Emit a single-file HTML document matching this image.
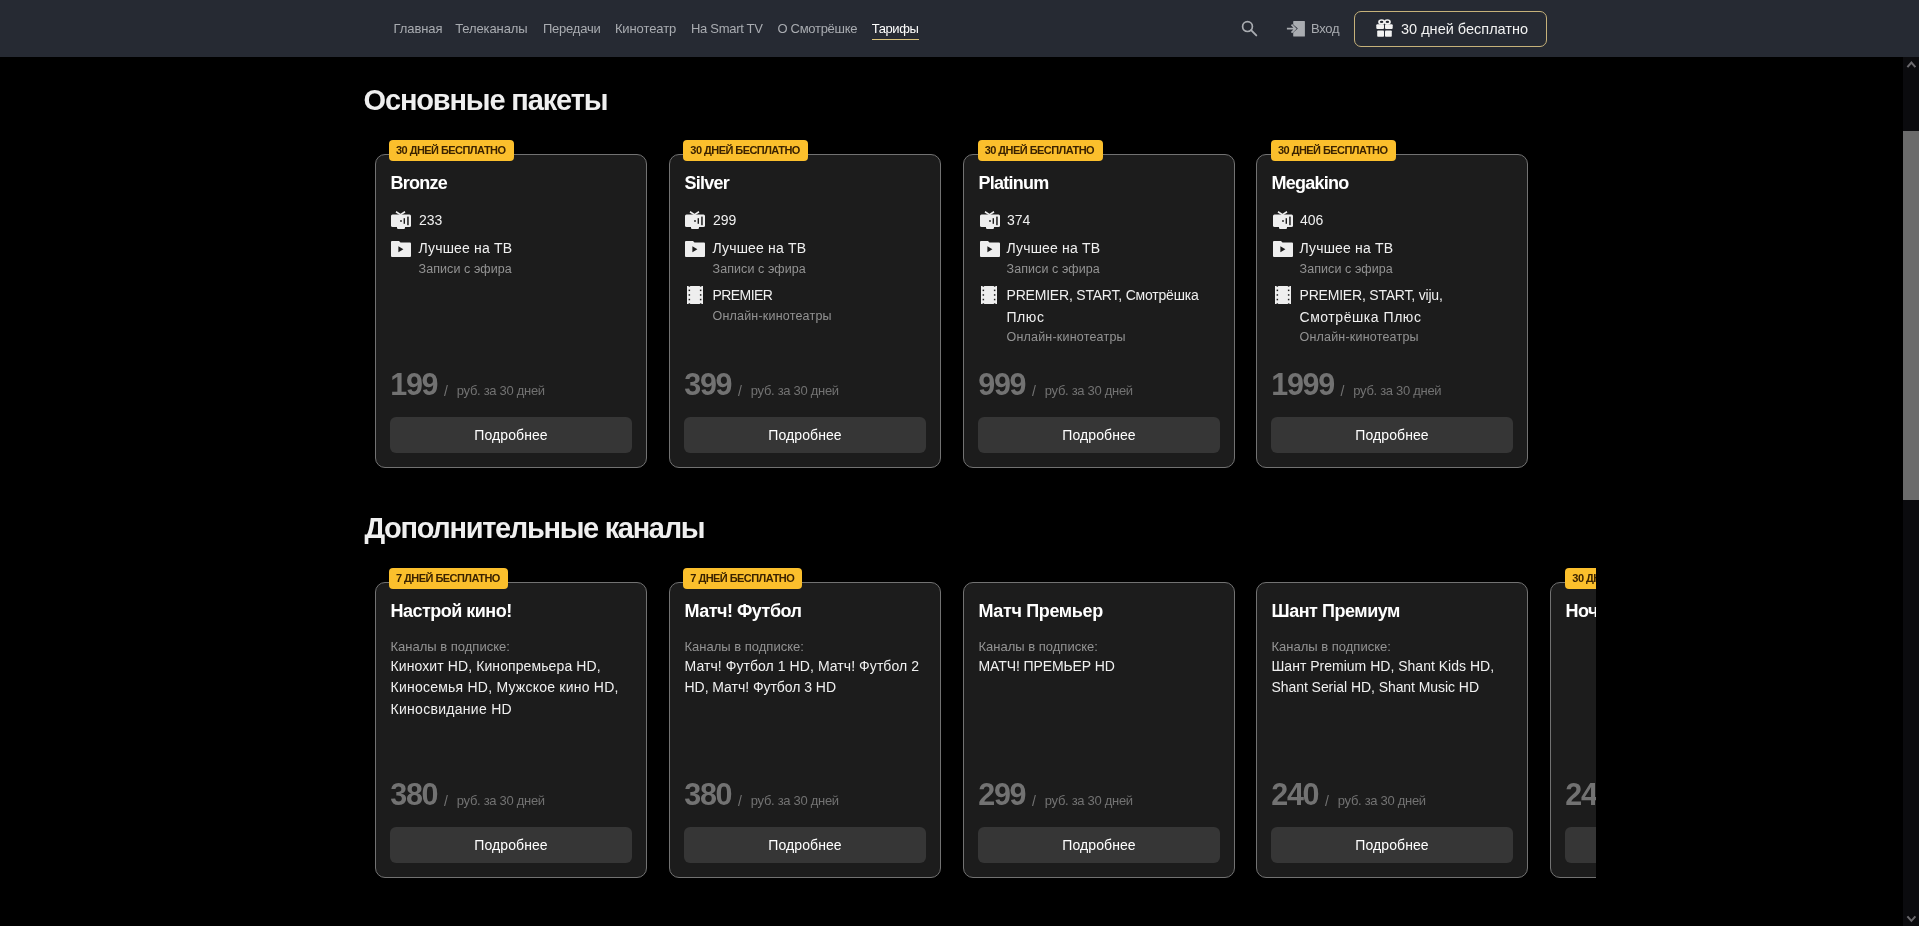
<!DOCTYPE html>
<html><head><meta charset="utf-8"><style>
html,body{margin:0;padding:0;background:#000;width:1920px;height:926px;overflow:hidden;position:relative;font-family:"Liberation Sans",sans-serif}
.t{position:absolute;white-space:nowrap;font-family:"Liberation Sans",sans-serif}
</style></head><body><div id="root" style="position:absolute;left:0;top:0;width:1920px;height:926px;will-change:transform">
<div style="position:absolute;left:0px;top:0px;width:1919px;height:57px;background:#262a33"></div>
<div class="t" style="left:393.59999999999997px;top:22.00px;font-size:13px;line-height:13px;font-weight:400;color:#a9acb1;letter-spacing:-0.1px;">Главная</div>
<div class="t" style="left:455.2px;top:22.00px;font-size:13px;line-height:13px;font-weight:400;color:#a9acb1;letter-spacing:-0.1px;">Телеканалы</div>
<div class="t" style="left:542.9000000000001px;top:22.00px;font-size:13px;line-height:13px;font-weight:400;color:#a9acb1;letter-spacing:-0.2px;">Передачи</div>
<div class="t" style="left:614.9000000000001px;top:22.00px;font-size:13px;line-height:13px;font-weight:400;color:#a9acb1;letter-spacing:-0.1px;">Кинотеатр</div>
<div class="t" style="left:691.0px;top:22.00px;font-size:13px;line-height:13px;font-weight:400;color:#a9acb1;letter-spacing:-0.3px;">На Smart TV</div>
<div class="t" style="left:777.5px;top:22.00px;font-size:13px;line-height:13px;font-weight:400;color:#a9acb1;letter-spacing:-0.3px;">О Смотрёшке</div>
<div class="t" style="left:871.7px;top:22.00px;font-size:13px;line-height:13px;font-weight:400;color:#fff;letter-spacing:-0.4px;">Тарифы</div>
<div style="position:absolute;left:872px;top:38.5px;width:47px;height:1.5px;background:#dcc47c"></div>
<svg style="position:absolute;left:1240px;top:20px" width="18" height="18" viewBox="0 0 18 18"><circle cx="7.5" cy="6.6" r="4.9" fill="none" stroke="#a9acb1" stroke-width="1.7"/><line x1="11.1" y1="10.2" x2="16.3" y2="15.4" stroke="#a9acb1" stroke-width="1.9" stroke-linecap="round"/></svg>
<svg style="position:absolute;left:1286px;top:20px" width="20" height="18" viewBox="0 0 20 18"><path d="M7.2 1.5 a0.6 0.6 0 0 1 0.6 -0.6 h10.5 a0.6 0.6 0 0 1 0.6 0.6 v14.5 a0.6 0.6 0 0 1 -0.6 0.6 h-10.5 a0.6 0.6 0 0 1 -0.6 -0.6 v-3.4 l4.6 -4 l-4.6 -4z" fill="#a9acb1"/><path d="M0.9 8.7 h8.8 M5.5 4.7 l4 4 l-4 4" fill="none" stroke="#a9acb1" stroke-width="1.8"/></svg>
<div class="t" style="left:1311px;top:22.00px;font-size:13px;line-height:13px;font-weight:400;color:#a9acb1;letter-spacing:-0.3px;">Вход</div>
<div style="position:absolute;left:1354px;top:11px;width:193px;height:36px;box-sizing:border-box;border:1.6px solid #c6b27a;border-radius:7px"></div>
<svg style="position:absolute;left:1375.5px;top:19px" width="17" height="18" viewBox="0 0 17 18"><ellipse cx="5.6" cy="2.9" rx="2.6" ry="1.9" fill="none" stroke="#f2f2f2" stroke-width="1.7"/><ellipse cx="11.4" cy="2.9" rx="2.6" ry="1.9" fill="none" stroke="#f2f2f2" stroke-width="1.7"/><rect x="0.3" y="5.3" width="7.7" height="4.6" rx="1" fill="#f2f2f2"/><rect x="9" y="5.3" width="7.7" height="4.6" rx="1" fill="#f2f2f2"/><rect x="1.2" y="11.5" width="6.8" height="6.3" rx="0.8" fill="#f2f2f2"/><rect x="9" y="11.5" width="6.8" height="6.3" rx="0.8" fill="#f2f2f2"/></svg>
<div class="t" style="left:1401px;top:21.93px;font-size:14.5px;line-height:14.5px;font-weight:400;color:#f2f2f2;letter-spacing:0px;">30 дней бесплатно</div>
<div style="position:absolute;left:1903px;top:57px;width:16px;height:869px;background:#0b0b0e"></div>
<div style="position:absolute;left:1903px;top:131px;width:16px;height:369px;background:#6b6b6b"></div>
<div style="position:absolute;left:1919px;top:0px;width:1px;height:926px;background:#fff"></div>
<svg style="position:absolute;left:1903px;top:57px" width="16" height="16" viewBox="0 0 16 16"><path d="M4.4 10.2 L8.4 5.6 L12.4 10.2" fill="none" stroke="#6b696d" stroke-width="2"/></svg>
<svg style="position:absolute;left:1903px;top:908px" width="16" height="16" viewBox="0 0 16 16"><path d="M4.4 8.4 L8.4 12.8 L12.4 8.4" fill="none" stroke="#6b696d" stroke-width="2"/></svg>
<div class="t" style="left:363.5px;top:86.35px;font-size:29px;line-height:29px;font-weight:700;color:#efefef;letter-spacing:-1.15px;">Основные пакеты</div>
<div class="t" style="left:364.4px;top:514.35px;font-size:29px;line-height:29px;font-weight:700;color:#efefef;letter-spacing:-1.32px;">Дополнительные каналы</div>
<div style="position:absolute;left:375px;top:154.2px;width:272px;height:313.7px;box-sizing:border-box;background:#1c1c1c;border:1px solid #727272;border-radius:10px"></div>
<div style="position:absolute;left:389.0px;top:139.89999999999998px;width:125px;height:21.2px;background:#fbbf2c;border-radius:4px"></div>
<div class="t" style="left:396.0px;top:144.79px;font-size:11px;line-height:11px;font-weight:700;color:#3a2200;letter-spacing:-0.55px;">30 ДНЕЙ БЕСПЛАТНО</div>
<div class="t" style="left:390.5px;top:173.76px;font-size:18px;line-height:18px;font-weight:700;color:#fff;letter-spacing:-0.75px;">Bronze</div>
<svg style="position:absolute;left:391.0px;top:210.5px" width="20" height="19" viewBox="0 0 20 19"><path d="M5 0.8 L9.5 3.6 L14 0.8" fill="none" stroke="#eee" stroke-width="1.6"/><rect x="0" y="3.5" width="20" height="12.5" rx="1.5" fill="#eee"/><rect x="6" y="15.3" width="8" height="2.6" rx="0.8" fill="#eee"/><circle cx="10" cy="10" r="0.9" fill="#1c1c1c"/><rect x="12.6" y="7.2" width="1.4" height="5.6" fill="#1c1c1c"/><rect x="16.2" y="5.6" width="1.5" height="8.6" fill="#1c1c1c"/></svg>
<div class="t" style="left:419px;top:212.95px;font-size:14px;line-height:14px;font-weight:400;color:#f0f0f0;letter-spacing:0px;">233</div>
<svg style="position:absolute;left:391.0px;top:240.5px" width="20" height="16" viewBox="0 0 20 16"><path d="M0 1 a1 1 0 0 1 1 -1 h7 l1.5 1.6 h9.5 a1 1 0 0 1 1 1 v12.4 a1 1 0 0 1 -1 1 h-18 a1 1 0 0 1 -1 -1z" fill="#eee"/><path d="M7.4 5.2 L12.4 8.2 L7.4 11.2z" fill="#1c1c1c"/></svg>
<div class="t" style="left:418.5px;top:240.85px;font-size:14px;line-height:14px;font-weight:400;color:#f0f0f0;letter-spacing:0.17px;">Лучшее на ТВ</div>
<div class="t" style="left:418.5px;top:263.22px;font-size:12.5px;line-height:12.5px;font-weight:400;color:#939393;letter-spacing:0.08px;">Записи с эфира</div>
<div class="t" style="left:390.3px;top:369.18px;font-size:30.5px;line-height:30.5px;font-weight:700;color:#727272;letter-spacing:-1.3px;">199</div>
<div class="t" style="left:444.0px;top:383.85px;font-size:14px;line-height:14px;font-weight:400;color:#727272;letter-spacing:0px;">/</div>
<div class="t" style="left:456.8px;top:384.00px;font-size:13px;line-height:13px;font-weight:400;color:#727272;letter-spacing:-0.3px;">руб. за 30 дней</div>
<div style="position:absolute;left:390px;top:417px;width:242px;height:35.5px;background:#363636;border-radius:6px"></div>
<div class="t" style="left:511px;top:428.15px;font-size:14px;line-height:14px;font-weight:400;color:#fff;letter-spacing:0.1px;transform:translateX(-50%)">Подробнее</div>
<div style="position:absolute;left:669px;top:154.2px;width:272px;height:313.7px;box-sizing:border-box;background:#1c1c1c;border:1px solid #727272;border-radius:10px"></div>
<div style="position:absolute;left:683.33px;top:139.89999999999998px;width:125px;height:21.2px;background:#fbbf2c;border-radius:4px"></div>
<div class="t" style="left:690.33px;top:144.79px;font-size:11px;line-height:11px;font-weight:700;color:#3a2200;letter-spacing:-0.55px;">30 ДНЕЙ БЕСПЛАТНО</div>
<div class="t" style="left:684.5px;top:173.76px;font-size:18px;line-height:18px;font-weight:700;color:#fff;letter-spacing:-0.75px;">Silver</div>
<svg style="position:absolute;left:685.33px;top:210.5px" width="20" height="19" viewBox="0 0 20 19"><path d="M5 0.8 L9.5 3.6 L14 0.8" fill="none" stroke="#eee" stroke-width="1.6"/><rect x="0" y="3.5" width="20" height="12.5" rx="1.5" fill="#eee"/><rect x="6" y="15.3" width="8" height="2.6" rx="0.8" fill="#eee"/><circle cx="10" cy="10" r="0.9" fill="#1c1c1c"/><rect x="12.6" y="7.2" width="1.4" height="5.6" fill="#1c1c1c"/><rect x="16.2" y="5.6" width="1.5" height="8.6" fill="#1c1c1c"/></svg>
<div class="t" style="left:713px;top:212.95px;font-size:14px;line-height:14px;font-weight:400;color:#f0f0f0;letter-spacing:0px;">299</div>
<svg style="position:absolute;left:685.33px;top:240.5px" width="20" height="16" viewBox="0 0 20 16"><path d="M0 1 a1 1 0 0 1 1 -1 h7 l1.5 1.6 h9.5 a1 1 0 0 1 1 1 v12.4 a1 1 0 0 1 -1 1 h-18 a1 1 0 0 1 -1 -1z" fill="#eee"/><path d="M7.4 5.2 L12.4 8.2 L7.4 11.2z" fill="#1c1c1c"/></svg>
<div class="t" style="left:712.5px;top:240.85px;font-size:14px;line-height:14px;font-weight:400;color:#f0f0f0;letter-spacing:0.17px;">Лучшее на ТВ</div>
<div class="t" style="left:712.5px;top:263.22px;font-size:12.5px;line-height:12.5px;font-weight:400;color:#939393;letter-spacing:0.08px;">Записи с эфира</div>
<svg style="position:absolute;left:686.83px;top:286px" width="16" height="18" viewBox="0 0 16 18"><rect width="16" height="18" fill="#eee"/><rect x="1.6" y="-0.8" width="1.5" height="1.5" fill="#1c1c1c"/><rect x="12.9" y="-0.8" width="1.5" height="1.5" fill="#1c1c1c"/><rect x="1.6" y="3.6" width="1.5" height="1.5" fill="#1c1c1c"/><rect x="12.9" y="3.6" width="1.5" height="1.5" fill="#1c1c1c"/><rect x="1.6" y="8.2" width="1.5" height="1.5" fill="#1c1c1c"/><rect x="12.9" y="8.2" width="1.5" height="1.5" fill="#1c1c1c"/><rect x="1.6" y="12.8" width="1.5" height="1.5" fill="#1c1c1c"/><rect x="12.9" y="12.8" width="1.5" height="1.5" fill="#1c1c1c"/><rect x="1.6" y="17.3" width="1.5" height="1.5" fill="#1c1c1c"/><rect x="12.9" y="17.3" width="1.5" height="1.5" fill="#1c1c1c"/></svg>
<div class="t" style="left:712.5px;top:288.15px;font-size:14px;line-height:14px;font-weight:400;color:#f0f0f0;letter-spacing:-0.57px;">PREMIER</div>
<div class="t" style="left:712.5px;top:309.62px;font-size:12.5px;line-height:12.5px;font-weight:400;color:#939393;letter-spacing:0.2px;">Онлайн-кинотеатры</div>
<div class="t" style="left:684.3px;top:369.18px;font-size:30.5px;line-height:30.5px;font-weight:700;color:#727272;letter-spacing:-1.3px;">399</div>
<div class="t" style="left:738.0px;top:383.85px;font-size:14px;line-height:14px;font-weight:400;color:#727272;letter-spacing:0px;">/</div>
<div class="t" style="left:750.8px;top:384.00px;font-size:13px;line-height:13px;font-weight:400;color:#727272;letter-spacing:-0.3px;">руб. за 30 дней</div>
<div style="position:absolute;left:684px;top:417px;width:242px;height:35.5px;background:#363636;border-radius:6px"></div>
<div class="t" style="left:805px;top:428.15px;font-size:14px;line-height:14px;font-weight:400;color:#fff;letter-spacing:0.1px;transform:translateX(-50%)">Подробнее</div>
<div style="position:absolute;left:963px;top:154.2px;width:272px;height:313.7px;box-sizing:border-box;background:#1c1c1c;border:1px solid #727272;border-radius:10px"></div>
<div style="position:absolute;left:977.67px;top:139.89999999999998px;width:125px;height:21.2px;background:#fbbf2c;border-radius:4px"></div>
<div class="t" style="left:984.67px;top:144.79px;font-size:11px;line-height:11px;font-weight:700;color:#3a2200;letter-spacing:-0.55px;">30 ДНЕЙ БЕСПЛАТНО</div>
<div class="t" style="left:978.5px;top:173.76px;font-size:18px;line-height:18px;font-weight:700;color:#fff;letter-spacing:-0.75px;">Platinum</div>
<svg style="position:absolute;left:979.67px;top:210.5px" width="20" height="19" viewBox="0 0 20 19"><path d="M5 0.8 L9.5 3.6 L14 0.8" fill="none" stroke="#eee" stroke-width="1.6"/><rect x="0" y="3.5" width="20" height="12.5" rx="1.5" fill="#eee"/><rect x="6" y="15.3" width="8" height="2.6" rx="0.8" fill="#eee"/><circle cx="10" cy="10" r="0.9" fill="#1c1c1c"/><rect x="12.6" y="7.2" width="1.4" height="5.6" fill="#1c1c1c"/><rect x="16.2" y="5.6" width="1.5" height="8.6" fill="#1c1c1c"/></svg>
<div class="t" style="left:1007px;top:212.95px;font-size:14px;line-height:14px;font-weight:400;color:#f0f0f0;letter-spacing:0px;">374</div>
<svg style="position:absolute;left:979.67px;top:240.5px" width="20" height="16" viewBox="0 0 20 16"><path d="M0 1 a1 1 0 0 1 1 -1 h7 l1.5 1.6 h9.5 a1 1 0 0 1 1 1 v12.4 a1 1 0 0 1 -1 1 h-18 a1 1 0 0 1 -1 -1z" fill="#eee"/><path d="M7.4 5.2 L12.4 8.2 L7.4 11.2z" fill="#1c1c1c"/></svg>
<div class="t" style="left:1006.5px;top:240.85px;font-size:14px;line-height:14px;font-weight:400;color:#f0f0f0;letter-spacing:0.17px;">Лучшее на ТВ</div>
<div class="t" style="left:1006.5px;top:263.22px;font-size:12.5px;line-height:12.5px;font-weight:400;color:#939393;letter-spacing:0.08px;">Записи с эфира</div>
<svg style="position:absolute;left:981.17px;top:286px" width="16" height="18" viewBox="0 0 16 18"><rect width="16" height="18" fill="#eee"/><rect x="1.6" y="-0.8" width="1.5" height="1.5" fill="#1c1c1c"/><rect x="12.9" y="-0.8" width="1.5" height="1.5" fill="#1c1c1c"/><rect x="1.6" y="3.6" width="1.5" height="1.5" fill="#1c1c1c"/><rect x="12.9" y="3.6" width="1.5" height="1.5" fill="#1c1c1c"/><rect x="1.6" y="8.2" width="1.5" height="1.5" fill="#1c1c1c"/><rect x="12.9" y="8.2" width="1.5" height="1.5" fill="#1c1c1c"/><rect x="1.6" y="12.8" width="1.5" height="1.5" fill="#1c1c1c"/><rect x="12.9" y="12.8" width="1.5" height="1.5" fill="#1c1c1c"/><rect x="1.6" y="17.3" width="1.5" height="1.5" fill="#1c1c1c"/><rect x="12.9" y="17.3" width="1.5" height="1.5" fill="#1c1c1c"/></svg>
<div class="t" style="left:1006.5px;top:288.15px;font-size:14px;line-height:14px;font-weight:400;color:#f0f0f0;letter-spacing:-0.2px;">PREMIER, START, Смотрёшка</div>
<div class="t" style="left:1006.5px;top:309.65px;font-size:14px;line-height:14px;font-weight:400;color:#f0f0f0;letter-spacing:0.55px;">Плюс</div>
<div class="t" style="left:1006.5px;top:331.12px;font-size:12.5px;line-height:12.5px;font-weight:400;color:#939393;letter-spacing:0.2px;">Онлайн-кинотеатры</div>
<div class="t" style="left:978.3px;top:369.18px;font-size:30.5px;line-height:30.5px;font-weight:700;color:#727272;letter-spacing:-1.3px;">999</div>
<div class="t" style="left:1032.0px;top:383.85px;font-size:14px;line-height:14px;font-weight:400;color:#727272;letter-spacing:0px;">/</div>
<div class="t" style="left:1044.8px;top:384.00px;font-size:13px;line-height:13px;font-weight:400;color:#727272;letter-spacing:-0.3px;">руб. за 30 дней</div>
<div style="position:absolute;left:978px;top:417px;width:242px;height:35.5px;background:#363636;border-radius:6px"></div>
<div class="t" style="left:1099px;top:428.15px;font-size:14px;line-height:14px;font-weight:400;color:#fff;letter-spacing:0.1px;transform:translateX(-50%)">Подробнее</div>
<div style="position:absolute;left:1256px;top:154.2px;width:272px;height:313.7px;box-sizing:border-box;background:#1c1c1c;border:1px solid #727272;border-radius:10px"></div>
<div style="position:absolute;left:1271.0px;top:139.89999999999998px;width:125px;height:21.2px;background:#fbbf2c;border-radius:4px"></div>
<div class="t" style="left:1278.0px;top:144.79px;font-size:11px;line-height:11px;font-weight:700;color:#3a2200;letter-spacing:-0.55px;">30 ДНЕЙ БЕСПЛАТНО</div>
<div class="t" style="left:1271.5px;top:173.76px;font-size:18px;line-height:18px;font-weight:700;color:#fff;letter-spacing:-0.75px;">Megakino</div>
<svg style="position:absolute;left:1273.0px;top:210.5px" width="20" height="19" viewBox="0 0 20 19"><path d="M5 0.8 L9.5 3.6 L14 0.8" fill="none" stroke="#eee" stroke-width="1.6"/><rect x="0" y="3.5" width="20" height="12.5" rx="1.5" fill="#eee"/><rect x="6" y="15.3" width="8" height="2.6" rx="0.8" fill="#eee"/><circle cx="10" cy="10" r="0.9" fill="#1c1c1c"/><rect x="12.6" y="7.2" width="1.4" height="5.6" fill="#1c1c1c"/><rect x="16.2" y="5.6" width="1.5" height="8.6" fill="#1c1c1c"/></svg>
<div class="t" style="left:1300px;top:212.95px;font-size:14px;line-height:14px;font-weight:400;color:#f0f0f0;letter-spacing:0px;">406</div>
<svg style="position:absolute;left:1273.0px;top:240.5px" width="20" height="16" viewBox="0 0 20 16"><path d="M0 1 a1 1 0 0 1 1 -1 h7 l1.5 1.6 h9.5 a1 1 0 0 1 1 1 v12.4 a1 1 0 0 1 -1 1 h-18 a1 1 0 0 1 -1 -1z" fill="#eee"/><path d="M7.4 5.2 L12.4 8.2 L7.4 11.2z" fill="#1c1c1c"/></svg>
<div class="t" style="left:1299.5px;top:240.85px;font-size:14px;line-height:14px;font-weight:400;color:#f0f0f0;letter-spacing:0.17px;">Лучшее на ТВ</div>
<div class="t" style="left:1299.5px;top:263.22px;font-size:12.5px;line-height:12.5px;font-weight:400;color:#939393;letter-spacing:0.08px;">Записи с эфира</div>
<svg style="position:absolute;left:1274.5px;top:286px" width="16" height="18" viewBox="0 0 16 18"><rect width="16" height="18" fill="#eee"/><rect x="1.6" y="-0.8" width="1.5" height="1.5" fill="#1c1c1c"/><rect x="12.9" y="-0.8" width="1.5" height="1.5" fill="#1c1c1c"/><rect x="1.6" y="3.6" width="1.5" height="1.5" fill="#1c1c1c"/><rect x="12.9" y="3.6" width="1.5" height="1.5" fill="#1c1c1c"/><rect x="1.6" y="8.2" width="1.5" height="1.5" fill="#1c1c1c"/><rect x="12.9" y="8.2" width="1.5" height="1.5" fill="#1c1c1c"/><rect x="1.6" y="12.8" width="1.5" height="1.5" fill="#1c1c1c"/><rect x="12.9" y="12.8" width="1.5" height="1.5" fill="#1c1c1c"/><rect x="1.6" y="17.3" width="1.5" height="1.5" fill="#1c1c1c"/><rect x="12.9" y="17.3" width="1.5" height="1.5" fill="#1c1c1c"/></svg>
<div class="t" style="left:1299.5px;top:288.15px;font-size:14px;line-height:14px;font-weight:400;color:#f0f0f0;letter-spacing:-0.2px;">PREMIER, START, viju,</div>
<div class="t" style="left:1299.5px;top:309.65px;font-size:14px;line-height:14px;font-weight:400;color:#f0f0f0;letter-spacing:0.55px;">Смотрёшка Плюс</div>
<div class="t" style="left:1299.5px;top:331.12px;font-size:12.5px;line-height:12.5px;font-weight:400;color:#939393;letter-spacing:0.2px;">Онлайн-кинотеатры</div>
<div class="t" style="left:1271.3px;top:369.18px;font-size:30.5px;line-height:30.5px;font-weight:700;color:#727272;letter-spacing:-1.3px;">1999</div>
<div class="t" style="left:1340.5px;top:383.85px;font-size:14px;line-height:14px;font-weight:400;color:#727272;letter-spacing:0px;">/</div>
<div class="t" style="left:1353.3px;top:384.00px;font-size:13px;line-height:13px;font-weight:400;color:#727272;letter-spacing:-0.3px;">руб. за 30 дней</div>
<div style="position:absolute;left:1271px;top:417px;width:242px;height:35.5px;background:#363636;border-radius:6px"></div>
<div class="t" style="left:1392px;top:428.15px;font-size:14px;line-height:14px;font-weight:400;color:#fff;letter-spacing:0.1px;transform:translateX(-50%)">Подробнее</div>
<div style="position:absolute;left:0;top:0;width:1596px;height:926px;overflow:hidden">
<div style="position:absolute;left:375px;top:582.2px;width:272px;height:296px;box-sizing:border-box;background:#1c1c1c;border:1px solid #727272;border-radius:10px"></div>
<div style="position:absolute;left:389.0px;top:567.9000000000001px;width:119px;height:21.2px;background:#fbbf2c;border-radius:4px"></div>
<div class="t" style="left:396.0px;top:572.79px;font-size:11px;line-height:11px;font-weight:700;color:#3a2200;letter-spacing:-0.55px;">7 ДНЕЙ БЕСПЛАТНО</div>
<div class="t" style="left:390.5px;top:601.76px;font-size:18px;line-height:18px;font-weight:700;color:#fff;letter-spacing:-0.51px;">Настрой кино!</div>
<div class="t" style="left:390.5px;top:640.20px;font-size:13px;line-height:13px;font-weight:400;color:#939393;letter-spacing:0px;">Каналы в подписке:</div>
<div class="t" style="left:390.5px;top:658.55px;font-size:14px;line-height:14px;font-weight:400;color:#f0f0f0;letter-spacing:0.1px;">Кинохит HD, Кинопремьера HD,</div>
<div class="t" style="left:390.5px;top:680.15px;font-size:14px;line-height:14px;font-weight:400;color:#f0f0f0;letter-spacing:0.23px;">Киносемья HD, Мужское кино HD,</div>
<div class="t" style="left:390.5px;top:701.75px;font-size:14px;line-height:14px;font-weight:400;color:#f0f0f0;letter-spacing:0.29px;">Киносвидание HD</div>
<div class="t" style="left:390.3px;top:779.18px;font-size:30.5px;line-height:30.5px;font-weight:700;color:#727272;letter-spacing:-1.3px;">380</div>
<div class="t" style="left:444.0px;top:793.85px;font-size:14px;line-height:14px;font-weight:400;color:#727272;letter-spacing:0px;">/</div>
<div class="t" style="left:456.8px;top:794.00px;font-size:13px;line-height:13px;font-weight:400;color:#727272;letter-spacing:-0.3px;">руб. за 30 дней</div>
<div style="position:absolute;left:390px;top:827px;width:242px;height:35.5px;background:#363636;border-radius:6px"></div>
<div class="t" style="left:511px;top:838.15px;font-size:14px;line-height:14px;font-weight:400;color:#fff;letter-spacing:0.1px;transform:translateX(-50%)">Подробнее</div>
<div style="position:absolute;left:669px;top:582.2px;width:272px;height:296px;box-sizing:border-box;background:#1c1c1c;border:1px solid #727272;border-radius:10px"></div>
<div style="position:absolute;left:683.33px;top:567.9000000000001px;width:119px;height:21.2px;background:#fbbf2c;border-radius:4px"></div>
<div class="t" style="left:690.33px;top:572.79px;font-size:11px;line-height:11px;font-weight:700;color:#3a2200;letter-spacing:-0.55px;">7 ДНЕЙ БЕСПЛАТНО</div>
<div class="t" style="left:684.5px;top:601.76px;font-size:18px;line-height:18px;font-weight:700;color:#fff;letter-spacing:-0.5px;">Матч! Футбол</div>
<div class="t" style="left:684.5px;top:640.20px;font-size:13px;line-height:13px;font-weight:400;color:#939393;letter-spacing:0px;">Каналы в подписке:</div>
<div class="t" style="left:684.5px;top:658.55px;font-size:14px;line-height:14px;font-weight:400;color:#f0f0f0;letter-spacing:0.07px;">Матч! Футбол 1 HD, Матч! Футбол 2</div>
<div class="t" style="left:684.5px;top:680.15px;font-size:14px;line-height:14px;font-weight:400;color:#f0f0f0;letter-spacing:-0.04px;">HD, Матч! Футбол 3 HD</div>
<div class="t" style="left:684.3px;top:779.18px;font-size:30.5px;line-height:30.5px;font-weight:700;color:#727272;letter-spacing:-1.3px;">380</div>
<div class="t" style="left:738.0px;top:793.85px;font-size:14px;line-height:14px;font-weight:400;color:#727272;letter-spacing:0px;">/</div>
<div class="t" style="left:750.8px;top:794.00px;font-size:13px;line-height:13px;font-weight:400;color:#727272;letter-spacing:-0.3px;">руб. за 30 дней</div>
<div style="position:absolute;left:684px;top:827px;width:242px;height:35.5px;background:#363636;border-radius:6px"></div>
<div class="t" style="left:805px;top:838.15px;font-size:14px;line-height:14px;font-weight:400;color:#fff;letter-spacing:0.1px;transform:translateX(-50%)">Подробнее</div>
<div style="position:absolute;left:963px;top:582.2px;width:272px;height:296px;box-sizing:border-box;background:#1c1c1c;border:1px solid #727272;border-radius:10px"></div>
<div class="t" style="left:978.5px;top:601.76px;font-size:18px;line-height:18px;font-weight:700;color:#fff;letter-spacing:-0.36px;">Матч Премьер</div>
<div class="t" style="left:978.5px;top:640.20px;font-size:13px;line-height:13px;font-weight:400;color:#939393;letter-spacing:0px;">Каналы в подписке:</div>
<div class="t" style="left:978.5px;top:658.55px;font-size:14px;line-height:14px;font-weight:400;color:#f0f0f0;letter-spacing:-0.1px;">МАТЧ! ПРЕМЬЕР HD</div>
<div class="t" style="left:978.3px;top:779.18px;font-size:30.5px;line-height:30.5px;font-weight:700;color:#727272;letter-spacing:-1.3px;">299</div>
<div class="t" style="left:1032.0px;top:793.85px;font-size:14px;line-height:14px;font-weight:400;color:#727272;letter-spacing:0px;">/</div>
<div class="t" style="left:1044.8px;top:794.00px;font-size:13px;line-height:13px;font-weight:400;color:#727272;letter-spacing:-0.3px;">руб. за 30 дней</div>
<div style="position:absolute;left:978px;top:827px;width:242px;height:35.5px;background:#363636;border-radius:6px"></div>
<div class="t" style="left:1099px;top:838.15px;font-size:14px;line-height:14px;font-weight:400;color:#fff;letter-spacing:0.1px;transform:translateX(-50%)">Подробнее</div>
<div style="position:absolute;left:1256px;top:582.2px;width:272px;height:296px;box-sizing:border-box;background:#1c1c1c;border:1px solid #727272;border-radius:10px"></div>
<div class="t" style="left:1271.5px;top:601.76px;font-size:18px;line-height:18px;font-weight:700;color:#fff;letter-spacing:-0.46px;">Шант Премиум</div>
<div class="t" style="left:1271.5px;top:640.20px;font-size:13px;line-height:13px;font-weight:400;color:#939393;letter-spacing:0px;">Каналы в подписке:</div>
<div class="t" style="left:1271.5px;top:658.55px;font-size:14px;line-height:14px;font-weight:400;color:#f0f0f0;letter-spacing:0.01px;">Шант Premium HD, Shant Kids HD,</div>
<div class="t" style="left:1271.5px;top:680.15px;font-size:14px;line-height:14px;font-weight:400;color:#f0f0f0;letter-spacing:-0.06px;">Shant Serial HD, Shant Music HD</div>
<div class="t" style="left:1271.3px;top:779.18px;font-size:30.5px;line-height:30.5px;font-weight:700;color:#727272;letter-spacing:-1.3px;">240</div>
<div class="t" style="left:1325.0px;top:793.85px;font-size:14px;line-height:14px;font-weight:400;color:#727272;letter-spacing:0px;">/</div>
<div class="t" style="left:1337.8px;top:794.00px;font-size:13px;line-height:13px;font-weight:400;color:#727272;letter-spacing:-0.3px;">руб. за 30 дней</div>
<div style="position:absolute;left:1271px;top:827px;width:242px;height:35.5px;background:#363636;border-radius:6px"></div>
<div class="t" style="left:1392px;top:838.15px;font-size:14px;line-height:14px;font-weight:400;color:#fff;letter-spacing:0.1px;transform:translateX(-50%)">Подробнее</div>
<div style="position:absolute;left:1550px;top:582.2px;width:272px;height:296px;box-sizing:border-box;background:#1c1c1c;border:1px solid #727272;border-radius:10px"></div>
<div style="position:absolute;left:1565.33px;top:567.9000000000001px;width:125px;height:21.2px;background:#fbbf2c;border-radius:4px"></div>
<div class="t" style="left:1572.33px;top:572.79px;font-size:11px;line-height:11px;font-weight:700;color:#3a2200;letter-spacing:-0.55px;">30 ДНЕЙ БЕСПЛАТНО</div>
<div class="t" style="left:1565.5px;top:601.76px;font-size:18px;line-height:18px;font-weight:700;color:#fff;letter-spacing:-0.5px;">Ночной</div>
<div class="t" style="left:1565.3px;top:779.18px;font-size:30.5px;line-height:30.5px;font-weight:700;color:#727272;letter-spacing:-1.3px;">240</div>
<div class="t" style="left:1619.0px;top:793.85px;font-size:14px;line-height:14px;font-weight:400;color:#727272;letter-spacing:0px;">/</div>
<div class="t" style="left:1631.8px;top:794.00px;font-size:13px;line-height:13px;font-weight:400;color:#727272;letter-spacing:-0.3px;">руб. за 30 дней</div>
<div style="position:absolute;left:1565px;top:827px;width:242px;height:35.5px;background:#363636;border-radius:6px"></div>
<div class="t" style="left:1686px;top:838.15px;font-size:14px;line-height:14px;font-weight:400;color:#fff;letter-spacing:0.1px;transform:translateX(-50%)">Подробнее</div>
</div>
</div></body></html>
